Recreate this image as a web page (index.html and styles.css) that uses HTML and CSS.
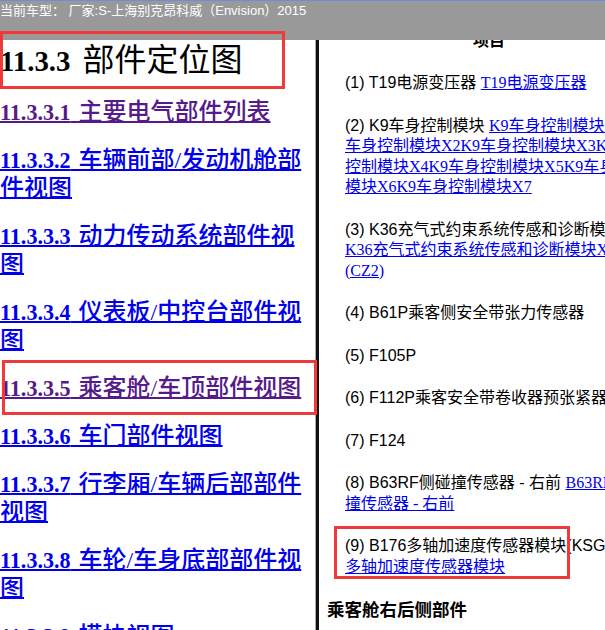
FILE: index.html
```html
<!DOCTYPE html>
<html lang="zh-CN">
<head>
<meta charset="utf-8">
<title>部件定位图</title>
<link rel="stylesheet" href="styles.css">
</head>
<body>
<div class="topbar">当前车型： 厂家:S-上海别克昂科威（Envision）2015</div>
<div class="main">
  <div class="left">
    <h1 class="title"><b class="num">11.3.3</b> 部件定位图</h1>
    <nav class="toc">
      <a class="toc-link visited" href="#"><b class="num">11.3.3.1</b> 主要电气部件列表</a>
      <a class="toc-link" href="#"><b class="num">11.3.3.2</b> 车辆前部/发动机舱部件视图</a>
      <a class="toc-link" href="#"><b class="num">11.3.3.3</b> 动力传动系统部件视图</a>
      <a class="toc-link" href="#"><b class="num">11.3.3.4</b> 仪表板/中控台部件视图</a>
      <a class="toc-link visited" href="#"><b class="num">11.3.3.5</b> 乘客舱/车顶部件视图</a>
      <a class="toc-link" href="#"><b class="num">11.3.3.6</b> 车门部件视图</a>
      <a class="toc-link" href="#"><b class="num">11.3.3.7</b> 行李厢/车辆后部部件视图</a>
      <a class="toc-link" href="#"><b class="num">11.3.3.8</b> 车轮/车身底部部件视图</a>
      <a class="toc-link" href="#"><b class="num">11.3.3.9</b> 模块视图</a>
    </nav>
  </div>
  <div class="divider"></div>
  <div class="right">
    <div class="right-inner">
      <div class="col-head">项目</div>
      <div class="items">
        <p>(1) T19电源变压器 <a href="#">T19电源变压器</a></p>
        <p>(2) K9车身控制模块 <a href="#">K9车身控制模块X1K9车身控制模块X2K9车身控制模块X3K9车身控制模块X4K9车身控制模块X5K9车身控制模块X6K9车身控制模块X7</a></p>
        <p>(3) K36充气式约束系统传感和诊断模块 <a href="#">K36充气式约束系统传感和诊断模块X1 (CZ2)</a></p>
        <p>(4) B61P乘客侧安全带张力传感器</p>
        <p>(5) F105P</p>
        <p>(6) F112P乘客安全带卷收器预张紧器</p>
        <p>(7) F124</p>
        <p>(8) B63RF侧碰撞传感器 - 右前 <a href="#">B63RF侧碰撞传感器 - 右前</a></p>
        <p>(9) B176多轴加速度传感器模块(KSG) <a href="#">B176多轴加速度传感器模块</a></p>
      </div>
      <h4 class="sub">乘客舱右后侧部件</h4>
    </div>
  </div>
</div>
<div class="mark mark-title"></div>
<div class="mark mark-link"></div>
<div class="mark mark-item"></div>
</body>
</html>
```

FILE: styles.css
```css
* {
  box-sizing: border-box;
}

html,
body {
  margin: 0;
  padding: 0;
}

body {
  width: 605px;
  height: 630px;
  overflow: hidden;
  position: relative;
  background: #fff;
  color: #000;
  font-family: "Liberation Serif", "Noto Sans CJK SC", serif;
}

.topbar {
  height: 40px;
  background: #999999;
  border-top: 1px solid #6d8ed6;
  color: #ffffff;
  font-family: "Liberation Sans", "Noto Sans CJK SC", sans-serif;
  font-size: 13px;
  line-height: 19px;
  white-space: nowrap;
}

.main {
  display: flex;
  height: 590px;
}

.left {
  width: 315px;
  flex: none;
  overflow: hidden;
}

.divider {
  width: 4px;
  flex: none;
  border-left: 1px solid #a8a8a8;
  background: #111;
}

.right {
  flex: 1;
  overflow: hidden;
  padding-left: 8px;
}

.right-inner {
  width: 340px;
  margin-top: -9px;
}

.title {
  margin: 0 0 18px;
  font-size: 32px;
  line-height: 40px;
  font-weight: normal;
  word-spacing: 4px;
  white-space: nowrap;
}

.num {
  font-weight: bold;
  font-size: 0.9em;
  line-height: 1;
}

.toc {
  display: flex;
  flex-direction: column;
  align-items: flex-start;
  gap: 20px;
}

.toc-link {
  font-size: 24px;
  line-height: 28px;
  font-weight: 500;
  word-spacing: 2px;
  color: #0000ee;
  text-decoration: underline;
  text-decoration-thickness: 2px;
}

.toc-link .num {
  font-size: 0.92em;
  font-weight: bold;
}

.toc-link.visited {
  color: #551a8b;
}

.col-head {
  width: 306px;
  margin-left: 18px;
  padding-right: 18px;
  margin-bottom: 22px;
  text-align: center;
  font-family: "Liberation Sans", "Noto Sans CJK SC", sans-serif;
  font-weight: bold;
  font-size: 16px;
  line-height: 20px;
}

.items {
  width: 306px;
  margin-left: 18px;
}

.items p {
  margin: 0 0 22px;
  font-family: "Liberation Sans", "Noto Sans CJK SC", sans-serif;
  font-size: 16px;
  line-height: 20.5px;
}

.items a {
  font-family: "Liberation Serif", "Noto Sans CJK SC", serif;
  color: #0000ee;
}

.sub {
  margin: 0;
  font-family: "Liberation Serif", "Noto Sans CJK SC", serif;
  font-size: 17.5px;
  line-height: 22px;
  font-weight: bold;
}

.mark {
  position: absolute;
  border: 3px solid #f03a3a;
}

.mark-title {
  left: 0;
  top: 31px;
  width: 285px;
  height: 58px;
}

.mark-link {
  left: 2px;
  top: 360px;
  width: 315px;
  height: 55px;
}

.mark-item {
  left: 334px;
  top: 526px;
  width: 236px;
  height: 53px;
}
```
